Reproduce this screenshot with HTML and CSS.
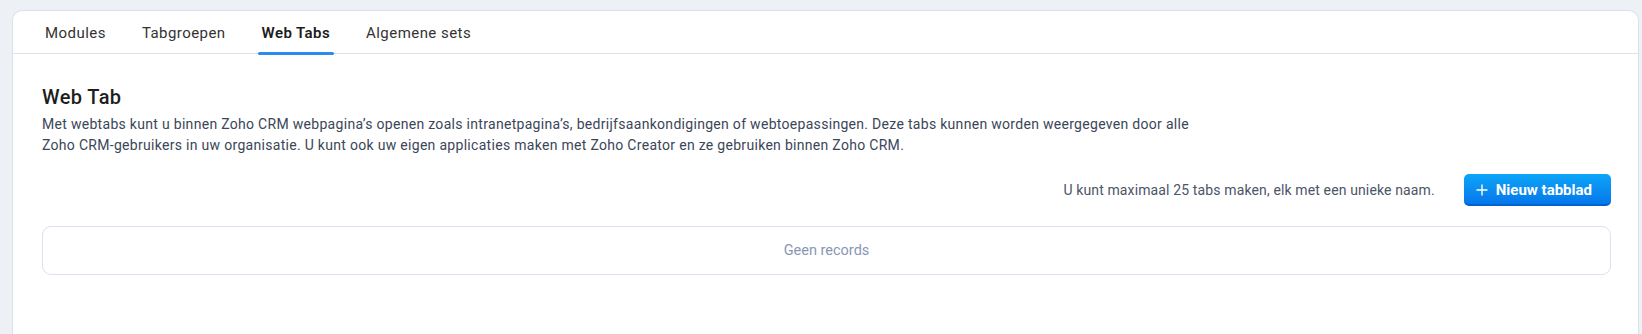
FILE: index.html
```html
<!DOCTYPE html>
<html lang="nl">
<head>
<meta charset="utf-8">
<title>Web Tabs</title>
<link rel="stylesheet" href="styles.css">
</head>
<body>
<div class="card">
  <nav class="tabbar">
    <a class="tab">Modules</a>
    <a class="tab">Tabgroepen</a>
    <a class="tab tab-active">Web Tabs</a>
    <a class="tab">Algemene sets</a>
  </nav>
  <section class="content">
    <h1 class="title">Web Tab</h1>
    <p class="desc">Met webtabs kunt u binnen Zoho CRM webpagina’s openen zoals intranetpagina’s, bedrijfsaankondigingen of webtoepassingen. Deze tabs kunnen worden weergegeven door alle Zoho CRM-gebruikers in uw organisatie. U kunt ook uw eigen applicaties maken met Zoho Creator en ze gebruiken binnen Zoho CRM.</p>
    <div class="actions">
      <span class="limit">U kunt maximaal 25 tabs maken, elk met een unieke naam.</span>
      <button class="btn-primary" type="button">
        <svg class="btn-icon" width="12" height="12" viewBox="0 0 12 12" aria-hidden="true"><path d="M6 0.5V11.5M0.5 6H11.5" stroke="#fff" stroke-width="1.4" fill="none"/></svg>
        <span>Nieuw tabblad</span>
      </button>
    </div>
    <div class="empty">Geen records</div>
  </section>
</div>
</body>
</html>
```
FILE: styles.css
```css
html, body {
  margin: 0;
  height: 100%;
  overflow: hidden;
}
body {
  background: #edf0f5;
  padding: 10px 3px 0 12px;
  box-sizing: border-box;
  font-family: Roboto, "Liberation Sans", sans-serif;
}
.card {
  background: #fff;
  border: 1px solid #d9e1eb;
  border-bottom: 0;
  border-radius: 10px 10px 0 0;
  height: calc(100vh - 10px);
  box-sizing: border-box;
}
.tabbar {
  display: flex;
  gap: 28px;
  padding: 0 0 0 28px;
  border-bottom: 1px solid #dbe3ed;
}
.tab {
  position: relative;
  padding: 12px 4px 10px;
  font-size: 15px;
  line-height: 20px;
  color: #333;
  letter-spacing: 0.45px;
}
.tab-active {
  font-weight: 600;
  color: #1c1c1c;
  letter-spacing: 0.4px;
}
.tab-active::after {
  content: "";
  position: absolute;
  left: 0;
  right: 0;
  bottom: -2px;
  height: 3px;
  border-radius: 2px;
  background: #2b8cf0;
}
.content {
  padding: 30px 27px 0 29px;
}
.title {
  margin: 0;
  font-size: 20px;
  font-weight: 500;
  line-height: 26px;
  color: #1e1e1e;
  letter-spacing: 0.4px;
}
.desc {
  margin: 4px 0 0;
  max-width: 1165px;
  font-size: 14px;
  line-height: 21px;
  color: #3b4658;
  letter-spacing: 0.3px;
}
.actions {
  display: flex;
  justify-content: flex-end;
  align-items: center;
  gap: 29px;
  margin-top: 18px;
}
.limit {
  font-size: 14px;
  line-height: 21px;
  color: #4b5567;
  letter-spacing: 0.13px;
}
.btn-primary {
  display: flex;
  align-items: center;
  gap: 8px;
  height: 32px;
  padding: 2px 19px 0 12px;
  border: 0;
  border-bottom: 2px solid #0062d0;
  border-radius: 5px;
  background: linear-gradient(180deg, #0ca5f7 0%, #0a8cf2 55%, #0477ea 100%);
  color: #fff;
  font-family: Roboto, "Liberation Sans", sans-serif;
  font-size: 15px;
  font-weight: 700;
  line-height: 20px;
}
.btn-icon {
  display: block;
}
.empty {
  margin-top: 20px;
  height: 47px;
  border: 1px solid #d9e2ee;
  border-radius: 9px;
  display: flex;
  align-items: center;
  justify-content: center;
  font-size: 14.5px;
  color: #8797b4;
}
```
